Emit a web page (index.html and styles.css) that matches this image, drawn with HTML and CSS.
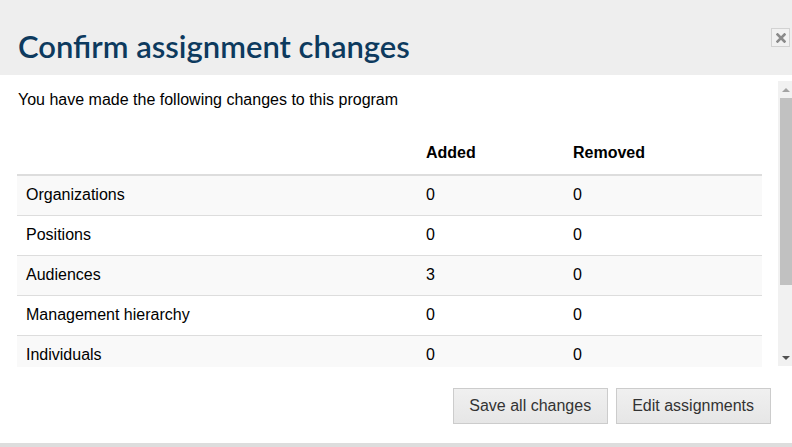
FILE: index.html
```html
<!DOCTYPE html>
<html>
<head>
	<title>Confirm assignment changes</title>
	<link rel="stylesheet" href="styles.css">
</head>
<body>
	<div class="dialog">
		<div class="dialog-header">
			<h1 class="dialog-title">Confirm assignment changes</h1>
			<button class="close-btn" title="Close">
				<svg width="10" height="10" viewBox="0 0 10 10">
					<path d="M1.5 1.5 L8.5 8.5 M8.5 1.5 L1.5 8.5" stroke="#8a8a8a" stroke-width="2.6" stroke-linecap="square"/>
				</svg>
			</button>
		</div>

		<div class="dialog-body">
			<div class="scroll-view">
				<p class="intro">You have made the following changes to this program</p>
				<table class="changes">
					<thead>
						<tr>
							<th class="col-name"></th>
							<th class="col-added">Added</th>
							<th>Removed</th>
						</tr>
					</thead>
					<tbody>
						<tr><td>Organizations</td><td>0</td><td>0</td></tr>
						<tr><td>Positions</td><td>0</td><td>0</td></tr>
						<tr><td>Audiences</td><td>3</td><td>0</td></tr>
						<tr><td>Management hierarchy</td><td>0</td><td>0</td></tr>
						<tr><td>Individuals</td><td>0</td><td>0</td></tr>
					</tbody>
				</table>
			</div>
			<div class="scrollbar">
				<div class="arrow arrow-up"></div>
				<div class="track">
					<div class="thumb"></div>
				</div>
				<div class="arrow arrow-down"></div>
			</div>
		</div>

		<div class="dialog-footer">
			<button class="btn">Save all changes</button>
			<button class="btn">Edit assignments</button>
		</div>
	</div>
</body>
</html>
```

FILE: styles.css
```css
body {
	margin: 0;
	background-color: #fff;
	font-family: "Liberation Sans", Arial, sans-serif;
	font-size: 16px;
	color: #000;
}

.dialog {
	height: 447px;
	display: flex;
	flex-direction: column;
	border-bottom: 4px solid #ddd;
	box-sizing: border-box;
}

.dialog-header {
	height: 75px;
	background-color: #eee;
	display: flex;
	align-items: center;
	justify-content: space-between;
	padding: 0 2px 0 18px;
	box-sizing: border-box;
}

.dialog-title {
	margin: 0;
	font-family: Lato, "Open Sans", sans-serif;
	font-size: 31px;
	font-weight: 600;
	color: #0d3a5e;
	padding-top: 17px;
}

.close-btn {
	width: 19px;
	height: 19px;
	padding: 0;
	background-color: #f1f1f1;
	border: 1px solid #d2d2d2;
	display: flex;
	align-items: center;
	justify-content: center;
	cursor: pointer;
	align-self: flex-start;
	margin-top: 28px;
}

.dialog-body {
	display: flex;
	height: 286px;
	margin-top: 6px;
	padding-left: 17px;
}

.scroll-view {
	flex: 1;
	overflow: hidden;
	padding-right: 16px;
}

.intro {
	margin: 9px 0 25px 1px;
	line-height: 20px;
}

.changes {
	width: 100%;
	border-collapse: collapse;
}

.changes th,
.changes td {
	text-align: left;
	padding: 9px 9px 11px;
	line-height: 19px;
}

.changes th {
	font-weight: bold;
	padding-top: 8px;
	padding-bottom: 12px;
	border-bottom: 2px solid #ddd;
}

.changes td {
	border-top: 1px solid #ddd;
}

.changes tbody tr:first-child td {
	border-top: none;
}

.changes tbody tr:nth-child(odd) {
	background-color: #f9f9f9;
}

.col-name {
	width: 382px;
}

.col-added {
	width: 129px;
}

.scrollbar {
	width: 14px;
	background-color: #f1f1f1;
	display: flex;
	flex-direction: column;
	margin-bottom: 1px;
}

.arrow {
	height: 17px;
	display: flex;
	align-items: center;
	justify-content: center;
}

.arrow-up::before {
	content: "";
	border-left: 4px solid transparent;
	border-right: 4px solid transparent;
	border-bottom: 4px solid #a3a3a3;
	margin-left: 2px;
}

.arrow-down::before {
	content: "";
	border-left: 4px solid transparent;
	border-right: 4px solid transparent;
	border-top: 4px solid #505050;
	margin-left: 2px;
}

.track {
	flex: 1;
	padding-left: 2px;
}

.thumb {
	height: 187px;
	background-color: #c1c1c1;
}

.dialog-footer {
	flex: 1;
	display: flex;
	justify-content: flex-end;
	align-items: flex-start;
	gap: 8px;
	padding: 21px 21px 0 0;
}

.btn {
	font-family: "Liberation Sans", Arial, sans-serif;
	font-size: 16px;
	line-height: 20px;
	color: #333;
	padding: 7px 16px 7px 15px;
	border: 1px solid #ccc;
	background: linear-gradient(#f0f0f0, #e6e6e6);
	cursor: pointer;
}
```
